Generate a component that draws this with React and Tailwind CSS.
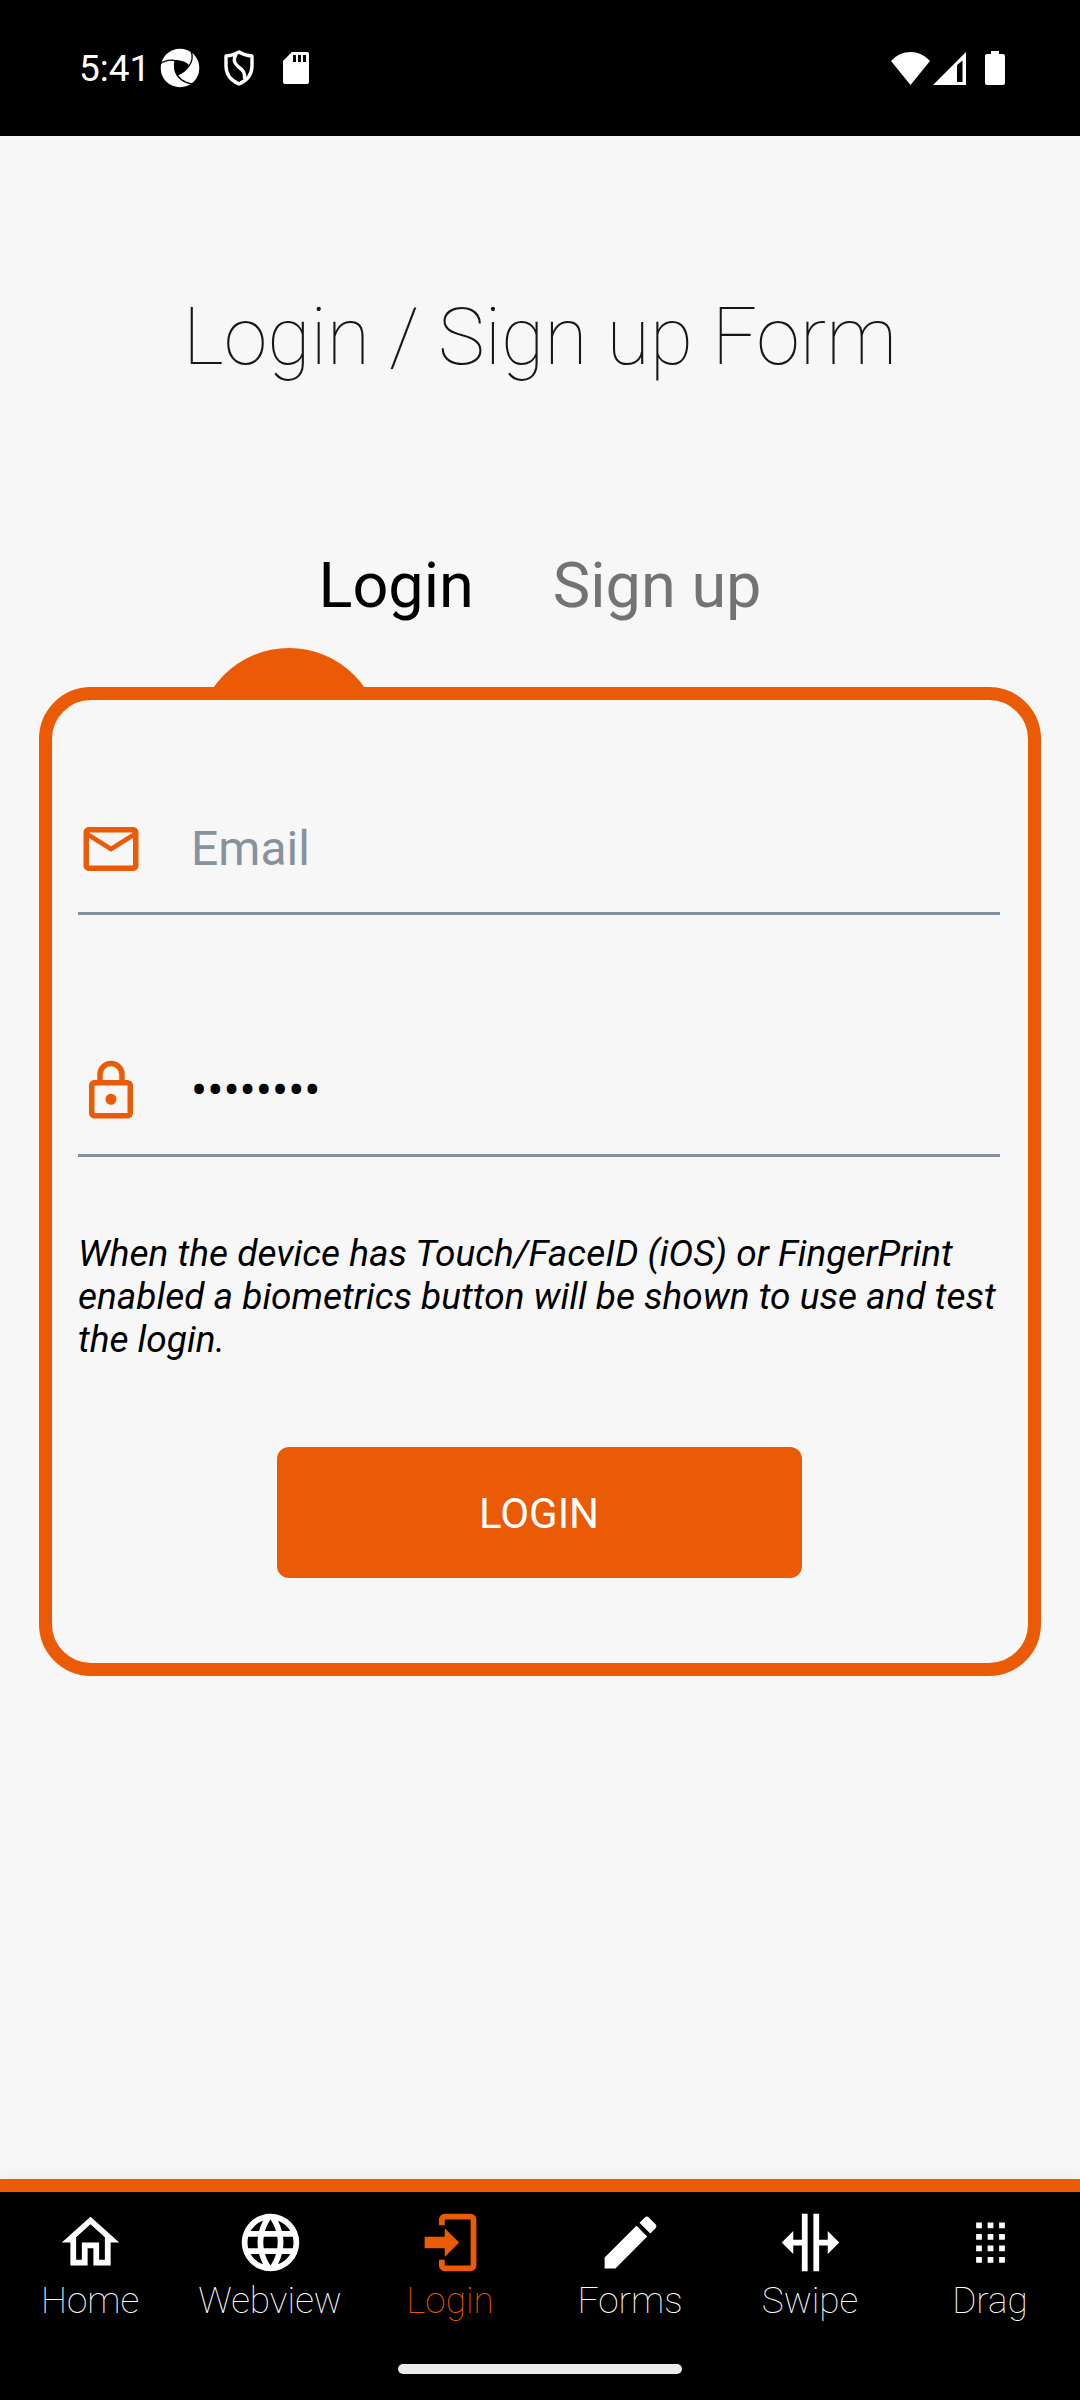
import { useState } from "react";

const icons = {
  home: "M12,5.69L17,10.19V18H15V12H9V18H7V10.19L12,5.69M12,3L2,12H5V20H11V14H13V20H19V12H22L12,3Z",
  web: "M16.36,14C16.44,13.34 16.5,12.68 16.5,12C16.5,11.32 16.44,10.66 16.36,10H19.74C19.9,10.64 20,11.31 20,12C20,12.69 19.9,13.36 19.74,14M14.59,19.56C15.19,18.45 15.65,17.25 15.97,16H18.92C17.96,17.65 16.43,18.93 14.59,19.56M14.34,14H9.66C9.56,13.34 9.5,12.68 9.5,12C9.5,11.32 9.56,10.65 9.66,10H14.34C14.43,10.65 14.5,11.32 14.5,12C14.5,12.68 14.43,13.34 14.34,14M12,19.96C11.17,18.76 10.5,17.43 10.09,16H13.91C13.5,17.43 12.83,18.76 12,19.96M8,8H5.08C6.03,6.34 7.57,5.06 9.4,4.44C8.8,5.55 8.35,6.75 8,8M5.08,16H8C8.35,17.25 8.8,18.45 9.4,19.56C7.57,18.93 6.03,17.65 5.08,16M4.26,14C4.1,13.36 4,12.69 4,12C4,11.31 4.1,10.64 4.26,10H7.64C7.56,10.66 7.5,11.32 7.5,12C7.5,12.68 7.56,13.34 7.64,14M12,4.03C12.83,5.23 13.5,6.57 13.91,8H10.09C10.5,6.57 11.17,5.23 12,4.03M18.92,8H15.97C15.65,6.75 15.19,5.55 14.59,4.44C16.43,5.07 17.96,6.34 18.92,8M12,2C6.47,2 2,6.5 2,12A10,10 0 0,0 12,22A10,10 0 0,0 22,12A10,10 0 0,0 12,2Z",
  login: "M10,17V14H3V10H10V7L15,12L10,17M10,2H19A2,2 0 0,1 21,4V20A2,2 0 0,1 19,22H10A2,2 0 0,1 8,20V18H10V20H19V4H10V6H8V4A2,2 0 0,1 10,2Z",
  pencil: "M20.71,7.04C21.1,6.65 21.1,6 20.71,5.63L18.37,3.29C18,2.9 17.35,2.9 16.96,3.29L15.12,5.12L18.87,8.87M3,17.25V21H6.75L17.81,9.93L14.06,6.18L3,17.25Z",
  swipe: "M18,16V13H15V22H13V2H15V11H18V8L22,12L18,16M2,12L6,16V13H9V22H11V2H9V11H6V8L2,12Z",
  drag: "M7,19V17H9V19H7M11,19V17H13V19H11M15,19V17H17V19H15M7,15V13H9V15H7M11,15V13H13V15H11M15,15V13H17V15H15M7,11V9H9V11H7M11,11V9H13V11H11M15,11V9H17V11H15M7,7V5H9V7H7M11,7V5H13V7H11M15,7V5H17V7H15Z",
  email: "M22,6C22,4.9 21.1,4 20,4H4C2.9,4 2,4.9 2,6V18C2,19.1 2.9,20 4,20H20C21.1,20 22,19.1 22,18V6M20,6L12,11L4,6H20M20,18H4V8L12,13L20,8V18Z",
  lock: "M12,17C10.89,17 10,16.1 10,15C10,13.89 10.89,13 12,13A2,2 0 0,1 14,15A2,2 0 0,1 12,17M18,20V10H6V20H18M18,8A2,2 0 0,1 20,10V20A2,2 0 0,1 18,22H6C4.89,22 4,21.1 4,20V10C4,8.89 4.89,8 6,8H7V6A5,5 0 0,1 12,1A5,5 0 0,1 17,6V8H18M12,3A3,3 0 0,0 9,6V8H15V6A3,3 0 0,0 12,3Z",
};

function Icon({ path, className }) {
  return (
    <svg viewBox="0 0 24 24" fill="currentColor" aria-hidden="true" className={className}>
      <path d={path} />
    </svg>
  );
}

function StatusBar() {
  return (
    <header className="flex h-[136px] items-center justify-between bg-black pr-[75px] pl-[79px] text-white">
      <div className="flex items-center">
        <time className="text-[37px] leading-none">5:41</time>
        <svg viewBox="0 0 40 40" className="ml-[10px] size-10" aria-hidden="true">
          <circle cx="20" cy="20" r="19.3" fill="#fff" />
          <g fill="none" stroke="#000" strokeWidth="1.3">
            <path d="M0 16C5 12 10 11.500 15 12.500C21 13 26 14.500 29 18" />
            <path d="M31 3C33 8 32.500 13 29 18C25 23.500 21 26 17 27" />
            <path d="M37 35.500C30 37 22 34 17 27C14.500 23 14 18 15 12.500" />
          </g>
          <path d="M15 12.500C21 13 26 14.500 29 18C25 23.500 21 26 17 27C14.500 23 14 18 15 12.500Z" fill="#000" />
        </svg>
        <svg viewBox="0 0 30 36" className="ml-6 h-9 w-[30px]" fill="none" stroke="#fff" strokeWidth="3.4" strokeLinejoin="round" aria-hidden="true">
          <path d="M15 2C11 4.500 7 5.500 2 6V16C2 24 7 30.500 15 34C23 30.500 28 24 28 16V6C23 5.500 19 4.500 15 2Z" />
          <path d="M12 4.500C9 9 10 13 14 16.500C19 20 21.500 23 20.500 29" />
        </svg>
        <svg viewBox="0 0 26 32" className="ml-[29px] h-8 w-[26px]" aria-hidden="true">
          <path d="M9 0H24Q26 0 26 2V30Q26 32 24 32H2Q0 32 0 30V9Z" fill="#fff" />
          <path d="M10 3h3v7h-3zM15 3h3v7h-3zM20 3h3v7h-3z" fill="#000" />
        </svg>
      </div>
      <div className="flex items-center">
        <svg viewBox="0 0 39 33" className="h-[33px] w-[39px]" fill="#fff" aria-hidden="true">
          <path d="M0 9C11 -3 28 -3 39 9L19.500 33Z" />
        </svg>
        <svg viewBox="0 0 33 33" className="ml-[3px] size-[33px]" fill="#fff" fillRule="evenodd" aria-hidden="true">
          <path d="M0 33L33 0V33ZM24 13V30H29.500V8.500Z" />
        </svg>
        <svg viewBox="0 0 20 34" className="ml-[19px] h-[34px] w-5" fill="#fff" aria-hidden="true">
          <path d="M6 0H14V3H18Q20 3 20 5V32Q20 34 18 34H2Q0 34 0 32V5Q0 3 2 3H6Z" />
        </svg>
      </div>
    </header>
  );
}

function Field({ id, label, icon, ...input }) {
  return (
    <div className="flex h-[130px] items-center border-b-3 border-[#86939e]">
      <label htmlFor={id} className="flex w-[113px] shrink-0" aria-label={label}>
        <Icon path={icon} className="size-[66px] text-[#eb5a05]" />
      </label>
      <input
        id={id}
        className="h-[105px] min-w-0 flex-1 bg-transparent text-[48px] text-black outline-none placeholder:text-[#86939e]"
        {...input}
      />
    </div>
  );
}

const tabs = [
  { name: "Home", icon: icons.home },
  { name: "Webview", icon: icons.web },
  { name: "Login", icon: icons.login, active: true },
  { name: "Forms", icon: icons.pencil },
  { name: "Swipe", icon: icons.swipe },
  { name: "Drag", icon: icons.drag },
];

export default function App() {
  const [email, setEmail] = useState("");
  const [password, setPassword] = useState("password");

  return (
    <div className="flex min-h-screen flex-col bg-[#f7f7f7] font-['Roboto',sans-serif] text-black">
      <StatusBar />

      <main className="flex-1 px-[39px] pt-[155px]">
        <h1 className="text-center text-[79px] leading-[92px] font-thin text-[#16161d]">Login / Sign up Form</h1>

        <div className="mt-[166px] flex justify-center gap-[79px] text-[63px] leading-[74px]">
          <button type="button">Login</button>
          <button type="button" className="text-[#737373]">Sign up</button>
        </div>

        <div className="mt-[25px] ml-[158px] h-[39px] w-[184px] overflow-hidden">
          <div className="size-[184px] rounded-full bg-[#eb5a05]" />
        </div>

        <form
          className="flex flex-col rounded-[52px] border-[13px] border-[#eb5a05] py-[85px] pr-7 pl-[26px]"
          onSubmit={(e) => e.preventDefault()}
        >
          <Field id="email" label="Email" icon={icons.email} type="email" placeholder="Email" value={email} onChange={(e) => setEmail(e.target.value)} />
          <div className="mt-28">
            <Field id="password" label="Password" icon={icons.lock} type="password" value={password} onChange={(e) => setPassword(e.target.value)} />
          </div>
          <p className="mt-[75px] text-[37px] leading-[43px] italic">
            When the device has Touch/FaceID (iOS) or FingerPrint enabled a biometrics button will be shown to use and test the login.
          </p>
          <button type="submit" className="mt-[86px] h-[131px] w-[525px] self-center rounded-xl bg-[#eb5a05] pt-0.5 text-[42px] text-white">
            LOGIN
          </button>
        </form>
      </main>

      <footer className="border-t-[13px] border-[#eb5a05] bg-black pt-4 shadow-[0_0_16px_rgba(0,0,0,0.08)]">
        <nav className="grid grid-cols-6">
          {tabs.map((tab) => (
            <a
              key={tab.name}
              href={"#" + tab.name.toLowerCase()}
              aria-current={tab.active ? "page" : undefined}
              className={"flex flex-col items-center " + (tab.active ? "text-[#eb5a05]" : "text-white")}
            >
              <Icon path={tab.icon} className="size-[69px]" />
              <span className="text-[37px] leading-[48px] font-thin">{tab.name}</span>
            </a>
          ))}
        </nav>
        <div className="mx-auto mt-[39px] mb-[26px] h-2.5 w-[284px] rounded-full bg-[#ebebeb]" />
      </footer>
    </div>
  );
}
